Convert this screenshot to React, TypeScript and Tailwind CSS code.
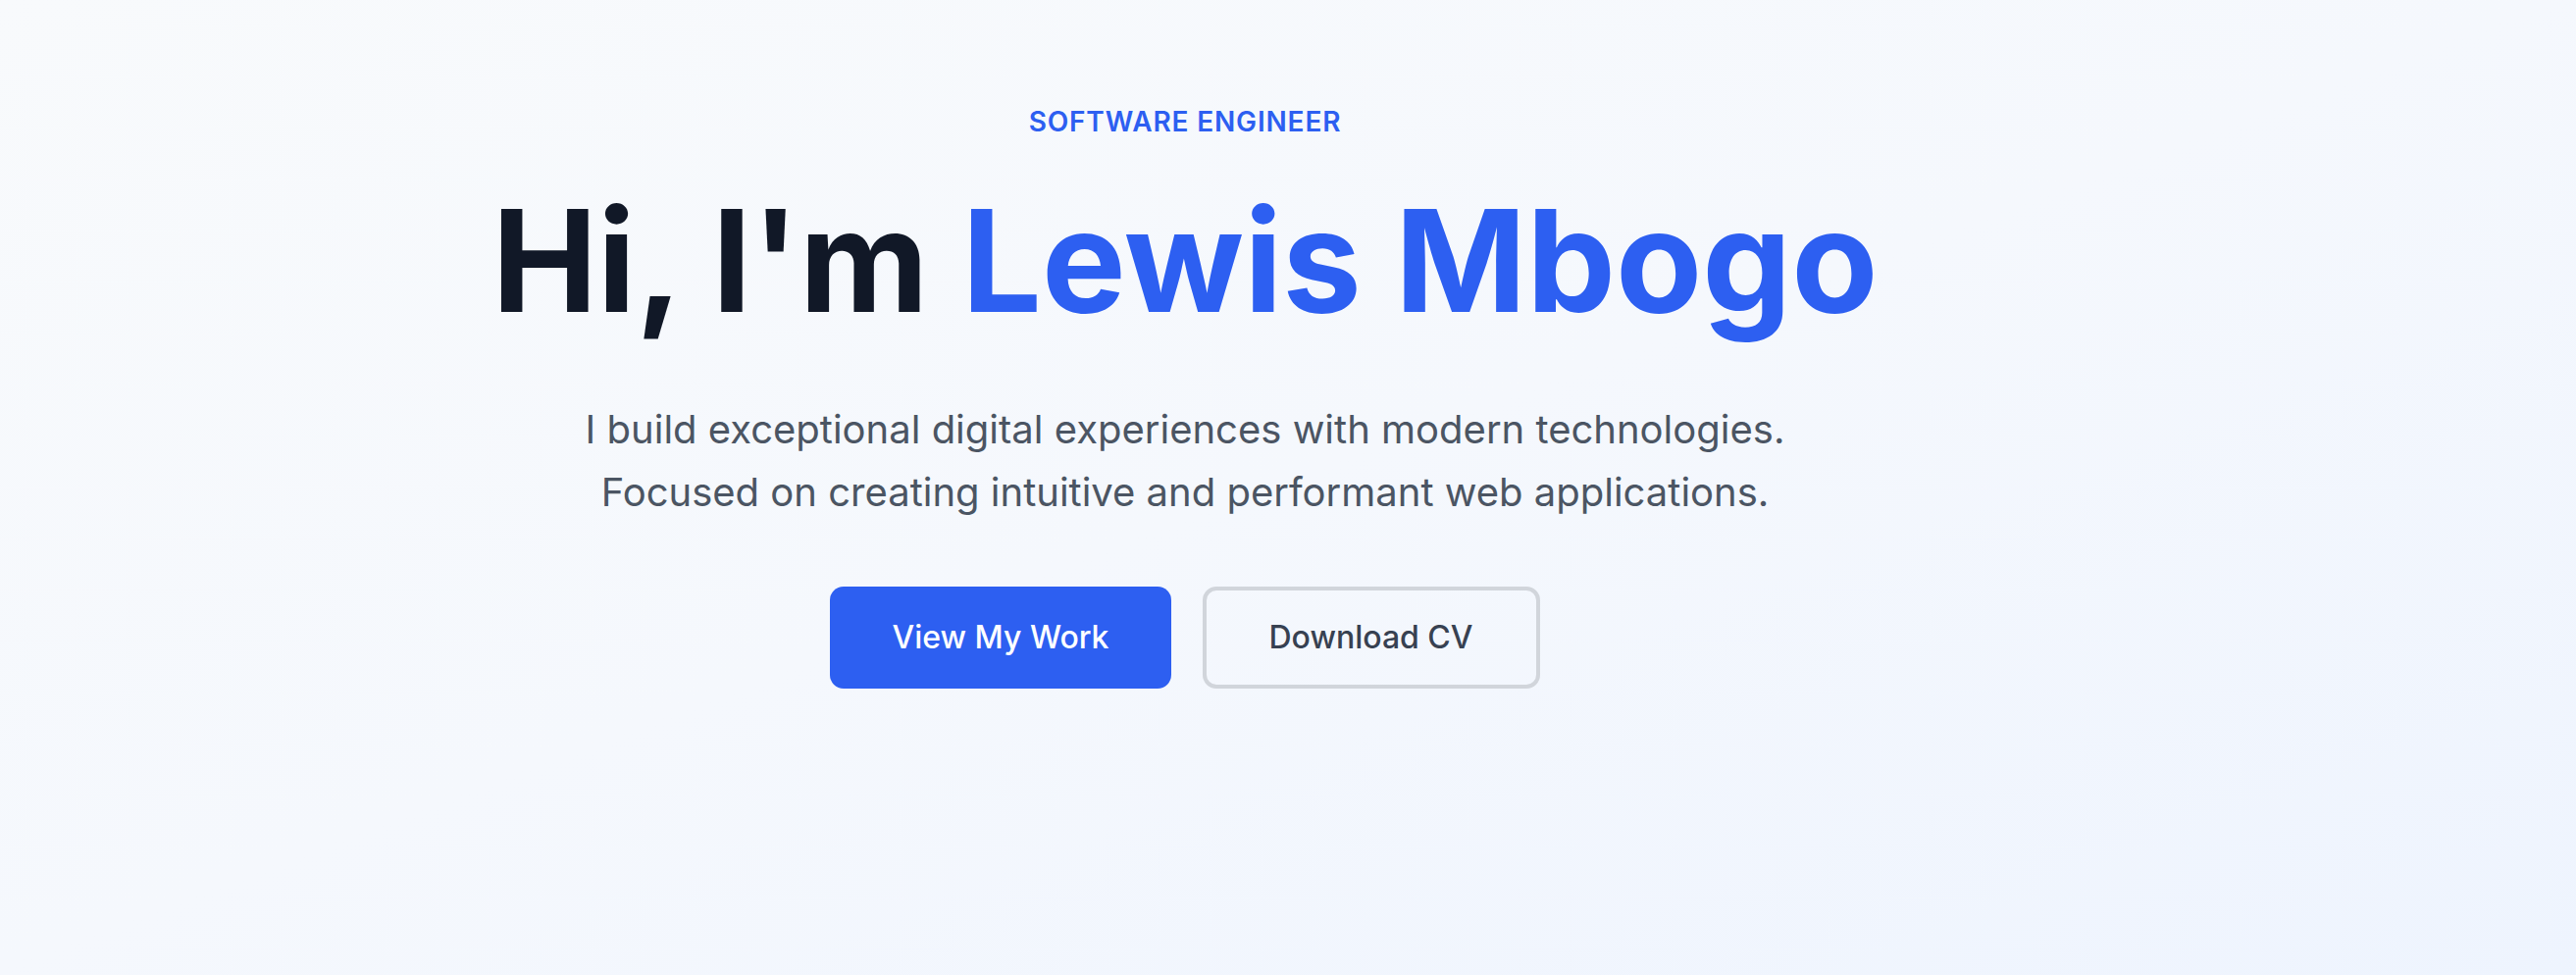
export default function App() {
  return (
    <section
      className="min-h-screen w-full bg-gradient-to-br from-[#f8fafc] via-[#f5f8fd] to-[#eef4fe] pr-[210px]"
      style={{ fontFamily: 'Inter, "Noto Sans", sans-serif' }}
    >
      <div className="flex flex-col items-center pt-[104px] text-center">
        <p className="text-[28px] leading-[40px] font-semibold tracking-[0.03em] text-[#2d5ff1] uppercase">
          Software Engineer
        </p>

        <h1 className="mt-[50px] text-[144px] leading-none font-bold text-[#111827]">
          Hi, I'm <span className="text-[#2d5ff1]">Lewis Mbogo</span>
        </h1>

        <p className="mt-[68px] text-[40px] leading-[64px] text-[#4b5563]">
          I build exceptional digital experiences with modern technologies.
          <br />
          Focused on creating intuitive and performant web applications.
        </p>

        <div className="mt-[64px] flex items-center gap-[32px]">
          <button className="h-[104px] rounded-[14px] bg-[#2d5ff1] px-[63px] text-[32px] font-medium text-white">
            View My Work
          </button>
          <button className="h-[104px] rounded-[14px] border-4 border-[#d1d5db] px-[64px] text-[32px] font-medium text-[#374151]">
            Download CV
          </button>
        </div>
      </div>
    </section>
  );
}
